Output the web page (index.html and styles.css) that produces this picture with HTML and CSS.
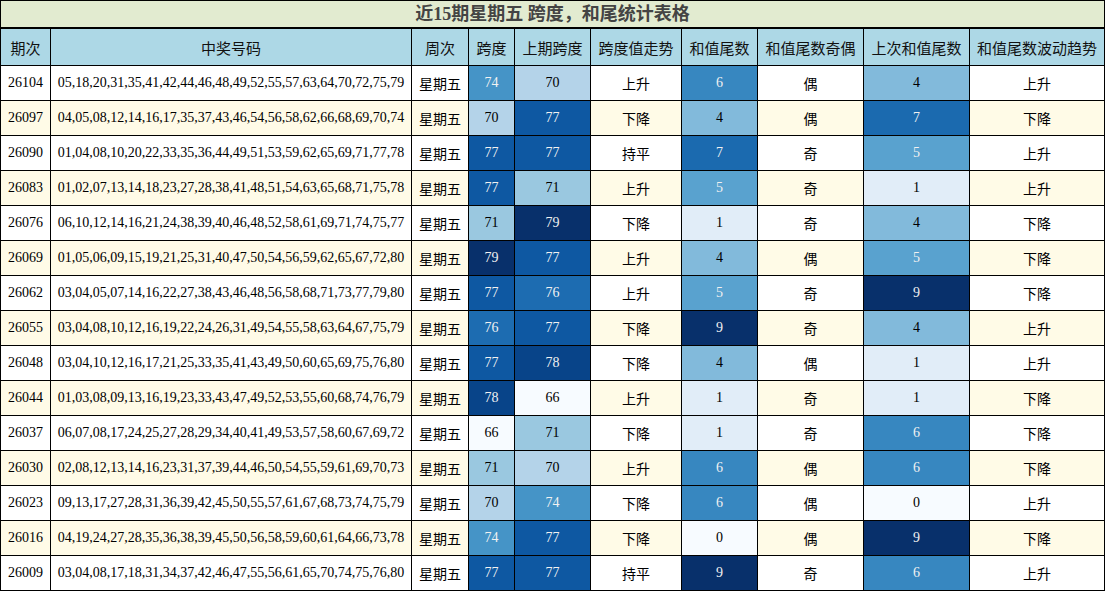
FILE: index.html
```html
<!DOCTYPE html>
<html lang="zh">
<head>
<meta charset="utf-8">
<title>近15期星期五 跨度，和尾统计表格</title>
<link rel="stylesheet" href="styles.css">
</head>
<body>
<table class="stats">
  <colgroup>
    <col class="w-issue"><col class="w-nums"><col class="w-week"><col class="w-span"><col class="w-pspan"><col class="w-trend"><col class="w-tail"><col class="w-oe"><col class="w-ptail"><col class="w-wave">
  </colgroup>
  <thead>
    <tr class="title-row"><th colspan="10">近15期星期五 跨度，和尾统计表格</th></tr>
    <tr class="head-row">
      <th>期次</th><th>中奖号码</th><th>周次</th><th>跨度</th><th>上期跨度</th><th>跨度值走势</th><th>和值尾数</th><th>和值尾数奇偶</th><th>上次和值尾数</th><th>和值尾数波动趋势</th>
    </tr>
  </thead>
  <tbody>
    <tr><td>26104</td><td>05,18,20,31,35,41,42,44,46,48,49,52,55,57,63,64,70,72,75,79</td><td>星期五</td><td class="s74">74</td><td class="s70">70</td><td>上升</td><td class="t6">6</td><td>偶</td><td class="t4">4</td><td>上升</td></tr>
    <tr><td>26097</td><td>04,05,08,12,14,16,17,35,37,43,46,54,56,58,62,66,68,69,70,74</td><td>星期五</td><td class="s70">70</td><td class="s77">77</td><td>下降</td><td class="t4">4</td><td>偶</td><td class="t7">7</td><td>下降</td></tr>
    <tr><td>26090</td><td>01,04,08,10,20,22,33,35,36,44,49,51,53,59,62,65,69,71,77,78</td><td>星期五</td><td class="s77">77</td><td class="s77">77</td><td>持平</td><td class="t7">7</td><td>奇</td><td class="t5">5</td><td>上升</td></tr>
    <tr><td>26083</td><td>01,02,07,13,14,18,23,27,28,38,41,48,51,54,63,65,68,71,75,78</td><td>星期五</td><td class="s77">77</td><td class="s71">71</td><td>上升</td><td class="t5">5</td><td>奇</td><td class="t1">1</td><td>上升</td></tr>
    <tr><td>26076</td><td>06,10,12,14,16,21,24,38,39,40,46,48,52,58,61,69,71,74,75,77</td><td>星期五</td><td class="s71">71</td><td class="s79">79</td><td>下降</td><td class="t1">1</td><td>奇</td><td class="t4">4</td><td>下降</td></tr>
    <tr><td>26069</td><td>01,05,06,09,15,19,21,25,31,40,47,50,54,56,59,62,65,67,72,80</td><td>星期五</td><td class="s79">79</td><td class="s77">77</td><td>上升</td><td class="t4">4</td><td>偶</td><td class="t5">5</td><td>下降</td></tr>
    <tr><td>26062</td><td>03,04,05,07,14,16,22,27,38,43,46,48,56,58,68,71,73,77,79,80</td><td>星期五</td><td class="s77">77</td><td class="s76">76</td><td>上升</td><td class="t5">5</td><td>奇</td><td class="t9">9</td><td>下降</td></tr>
    <tr><td>26055</td><td>03,04,08,10,12,16,19,22,24,26,31,49,54,55,58,63,64,67,75,79</td><td>星期五</td><td class="s76">76</td><td class="s77">77</td><td>下降</td><td class="t9">9</td><td>奇</td><td class="t4">4</td><td>上升</td></tr>
    <tr><td>26048</td><td>03,04,10,12,16,17,21,25,33,35,41,43,49,50,60,65,69,75,76,80</td><td>星期五</td><td class="s77">77</td><td class="s78">78</td><td>下降</td><td class="t4">4</td><td>偶</td><td class="t1">1</td><td>上升</td></tr>
    <tr><td>26044</td><td>01,03,08,09,13,16,19,23,33,43,47,49,52,53,55,60,68,74,76,79</td><td>星期五</td><td class="s78">78</td><td class="s66">66</td><td>上升</td><td class="t1">1</td><td>奇</td><td class="t1">1</td><td>下降</td></tr>
    <tr><td>26037</td><td>06,07,08,17,24,25,27,28,29,34,40,41,49,53,57,58,60,67,69,72</td><td>星期五</td><td class="s66">66</td><td class="s71">71</td><td>下降</td><td class="t1">1</td><td>奇</td><td class="t6">6</td><td>下降</td></tr>
    <tr><td>26030</td><td>02,08,12,13,14,16,23,31,37,39,44,46,50,54,55,59,61,69,70,73</td><td>星期五</td><td class="s71">71</td><td class="s70">70</td><td>上升</td><td class="t6">6</td><td>偶</td><td class="t6">6</td><td>下降</td></tr>
    <tr><td>26023</td><td>09,13,17,27,28,31,36,39,42,45,50,55,57,61,67,68,73,74,75,79</td><td>星期五</td><td class="s70">70</td><td class="s74">74</td><td>下降</td><td class="t6">6</td><td>偶</td><td class="t0">0</td><td>上升</td></tr>
    <tr><td>26016</td><td>04,19,24,27,28,35,36,38,39,45,50,56,58,59,60,61,64,66,73,78</td><td>星期五</td><td class="s74">74</td><td class="s77">77</td><td>下降</td><td class="t0">0</td><td>偶</td><td class="t9">9</td><td>下降</td></tr>
    <tr><td>26009</td><td>03,04,08,17,18,31,34,37,42,46,47,55,56,61,65,70,74,75,76,80</td><td>星期五</td><td class="s77">77</td><td class="s77">77</td><td>持平</td><td class="t9">9</td><td>奇</td><td class="t6">6</td><td>上升</td></tr>
  </tbody>
</table>
</body>
</html>
```

FILE: styles.css
```css
html, body {
  margin: 0;
  padding: 0;
  background: #ffffff;
}

.stats {
  border-collapse: collapse;
  table-layout: fixed;
  width: 1105px;
  font-family: "Liberation Serif", "Noto Sans CJK SC", serif;
  font-size: 14px;
  color: #000;
}

.w-issue { width: 50px; }
.w-nums { width: 361px; }
.w-week { width: 57px; }
.w-span { width: 46px; }
.w-pspan { width: 76px; }
.w-trend { width: 91px; }
.w-tail { width: 76px; }
.w-oe { width: 106px; }
.w-ptail { width: 106px; }
.w-wave { width: 135px; }

.stats th,
.stats td {
  border: 1px solid #000;
  padding: 0;
  text-align: center;
  vertical-align: middle;
  white-space: nowrap;
  overflow: hidden;
}

.title-row th {
  height: 26px;
  background: #e2ebd0;
  color: #444;
  font-size: 18px;
  font-weight: bold;
  border-bottom-width: 2px;
  line-height: 24px;
}

.head-row th {
  height: 36px;
  background: #add8e6;
  font-family: "Noto Sans CJK SC", sans-serif;
  font-size: 15px;
  font-weight: normal;
  color: #111;
}

.stats tbody tr td {
  height: 34px;
  background: #ffffff;
}

.stats tbody tr:nth-child(even) td {
  background: #fffbe7;
}

/* span heat colours (Blues, 66..79) */
.stats tbody tr td.s66 { background: #f7fbff; color: #000; }
.stats tbody tr td.s70 { background: #b4d3e9; color: #000; }
.stats tbody tr td.s71 { background: #9ac8e0; color: #000; }
.stats tbody tr td.s74 { background: #4594c7; color: #f1f1f1; }
.stats tbody tr td.s76 { background: #1d6cb1; color: #f1f1f1; }
.stats tbody tr td.s77 { background: #0e58a2; color: #f1f1f1; }
.stats tbody tr td.s78 { background: #084489; color: #f1f1f1; }
.stats tbody tr td.s79 { background: #08306b; color: #f1f1f1; }

/* tail heat colours (Blues, 0..9) */
.stats tbody tr td.t0 { background: #f7fbff; color: #000; }
.stats tbody tr td.t1 { background: #e1edf8; color: #000; }
.stats tbody tr td.t4 { background: #82badb; color: #000; }
.stats tbody tr td.t5 { background: #59a2cf; color: #f1f1f1; }
.stats tbody tr td.t6 { background: #3787c0; color: #f1f1f1; }
.stats tbody tr td.t7 { background: #1b6aaf; color: #f1f1f1; }
.stats tbody tr td.t9 { background: #08306b; color: #f1f1f1; }
```
